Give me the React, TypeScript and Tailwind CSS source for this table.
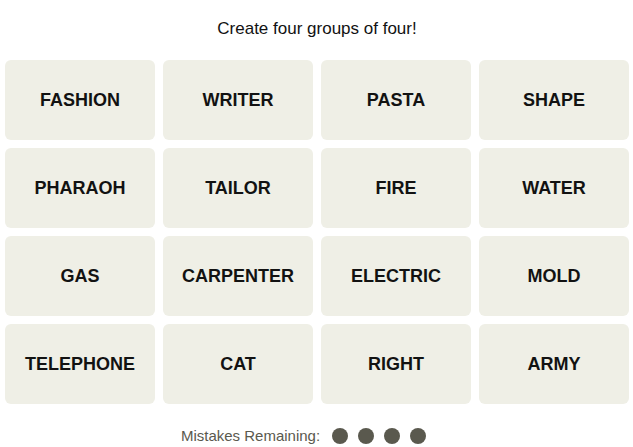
import React from "react";

const words = [
  "FASHION", "WRITER", "PASTA", "SHAPE",
  "PHARAOH", "TAILOR", "FIRE", "WATER",
  "GAS", "CARPENTER", "ELECTRIC", "MOLD",
  "TELEPHONE", "CAT", "RIGHT", "ARMY",
];

export default function App() {
  return (
    <div className="w-[633px] h-[447px] bg-white overflow-hidden" style={{ fontFamily: '"Liberation Sans", Arial, sans-serif' }}>
      <div className="h-[60px] flex items-center justify-center pb-[2px] pl-[1px] text-[17px] text-[#121212]">
        Create four groups of four!
      </div>
      <div className="pl-[5px] grid grid-cols-[repeat(4,150px)] grid-rows-[repeat(4,80px)] gap-[8px]">
        {words.map((w) => (
          <div key={w} className="bg-[#efefe6] rounded-[6px] flex items-center justify-center font-bold text-[18px] text-[#121212]">
            {w}
          </div>
        ))}
      </div>
      <div className="h-[43px] flex items-center justify-center pt-[21px] pr-[26px]">
        <span className="text-[15px] text-[#5a594e] mr-[12px]">Mistakes Remaining:</span>
        <div className="flex gap-[10px]">
          {[0, 1, 2, 3].map((i) => (
            <div key={i} className="w-[16px] h-[16px] rounded-full bg-[#5a594e]" />
          ))}
        </div>
      </div>
    </div>
  );
}
